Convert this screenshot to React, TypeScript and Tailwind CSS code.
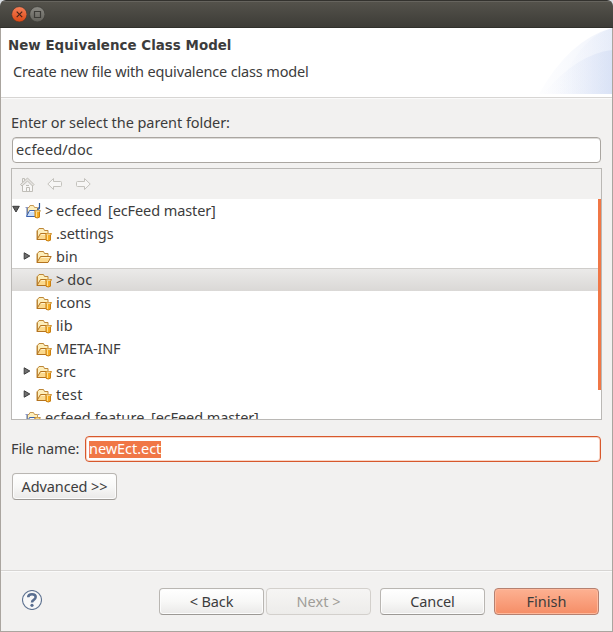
import React from "react";

function Folder({ badge = false }: { badge?: boolean }) {
  return (
    <svg width="16" height="16" viewBox="0 0 16 16" className="block shrink-0" fill="none">
      <path d="M1.500 12V4.500L3 2.500h4.500l1 2h3.500V7" fill="#fdeebb" stroke="#bd8637" />
      <path d="M1 13.500V4.500" stroke="#bd8637" />
      <path d="M1 13.500 4.500 7.500h10.700l-3.200 6z" fill="#fbd98d" stroke="#b4731f" strokeLinejoin="round" />
      <path d="M5.300 8.500h8.200" stroke="#fff3cd" />
      {badge && <Cylinder />}
    </svg>
  );
}

function Cylinder() {
  return (
    <g>
      <path d="M10 8v6.200q2.200 1.600 4.500 0V8z" fill="#f5a81d" stroke="#c97f12" />
      <path d="M11.500 9v5" stroke="#ffe08a" strokeWidth="1.200" />
      <path d="M9.500 8h6" stroke="#d28a14" strokeWidth="1.500" />
      <path d="M10.500 8.200h4" stroke="#fff0bd" />
    </g>
  );
}

function ProjectFolder({ java = false }: { java?: boolean }) {
  return (
    <svg width="16" height="16" viewBox="0 0 16 16" className="block shrink-0 overflow-visible" fill="none">
      <path d="M2.500 12V4.500h1.500l1-2h3.500l1 2h3V7" fill="#fdeebb" stroke="#c79a55" />
      <path d="M.5 4.500h2.500M13 4.500h1.500" stroke="#8d97c4" />
      <path d="M2 13.500V5" stroke="#4a6fb5" />
      <path d="M1.500 13.500 4.500 7.500h10.500l-3 6z" fill="#c9defa" stroke="#3b62b0" strokeLinejoin="round" />
      <path d="M5 8.500h8" stroke="#f4f9ff" />
      <Cylinder />
      {java && <path d="M14.500 0v4.500q0 2-2.500 1.500" stroke="#2b5797" strokeWidth="1.200" />}
    </svg>
  );
}

function Twisty({ open = false }: { open?: boolean }) {
  return (
    <svg width="8" height="8" viewBox="0 0 8 8" className="block shrink-0">
      {open ? (
        <path d="M.7 1.300h6.600L4 7z" fill="#606060" stroke="#3c3c3c" />
      ) : (
        <path d="M1.200 .8 6.800 4 1.200 7.200z" fill="#707070" stroke="#3c3c3c" />
      )}
    </svg>
  );
}

type RowProps = {
  name: string;
  tracking?: string;
  arrow?: boolean;
  plain?: boolean;
  changed?: boolean;
  selected?: boolean;
};

const rows: RowProps[] = [
  { name: ".settings", tracking: "tracking-[-0.05px]" },
  { name: "bin", arrow: true, plain: true, tracking: "tracking-[0.1px]" },
  { name: "doc", changed: true, selected: true, tracking: "tracking-[0.1px]" },
  { name: "icons", tracking: "tracking-[-0.1px]" },
  { name: "lib", tracking: "tracking-[0.1px]" },
  { name: "META-INF", tracking: "tracking-[-0.15px]" },
  { name: "src", arrow: true, tracking: "tracking-[0.2px]" },
  { name: "test", arrow: true, tracking: "tracking-[0.3px]" },
];

function Row({ name, tracking = "", arrow, plain, changed, selected }: RowProps) {
  return (
    <div
      className={
        "flex h-[23px] shrink-0 items-center pl-[11px] " +
        (selected ? "border-t border-[#cfcdca] bg-linear-to-b from-[#ebeae9] to-[#dad8d6]" : "")
      }
    >
      <div className="mb-[2px] w-[13px]">{arrow && <Twisty />}</div>
      <Folder badge={!plain} />
      <span className={"mb-[2px] ml-1 " + tracking}>
        {changed && <span className="mr-[3px] tracking-normal">&gt;</span>}
        {name}
      </span>
    </div>
  );
}

function Button({ label, kind = "normal", className = "" }: { label: string; kind?: "normal" | "disabled" | "primary"; className?: string }) {
  const look =
    kind === "primary"
      ? "border-[#b58171] bg-linear-to-b from-[#fdb192] to-[#f58d66] shadow-[inset_0_0_0_1px_#ffb99c]"
      : kind === "disabled"
        ? "border-[#d3d0cc] bg-linear-to-b from-[#f6f5f4] to-[#edecea] text-[#a09d98]"
        : "border-[#b9b6b2] border-b-[#9c9995] bg-linear-to-b from-white via-[#f8f8f7] to-[#eae9e8] shadow-[inset_0_0_0_1px_#fcfcfc]";
  return (
    <button className={"flex h-[27px] w-[105px] items-center justify-center rounded-[4px] border pb-px " + look + " " + className}>
      {label}
    </button>
  );
}

export default function App() {
  return (
    <div className="h-[632px] w-[613px] overflow-hidden bg-[#d9dde2] font-['Noto_Sans',sans-serif] text-[14.5px] leading-[22px] whitespace-nowrap text-[#3c3c3c]">
      <div className="flex h-full flex-col overflow-hidden rounded-t-[6px]">
        <div className="flex h-7 shrink-0 items-center gap-[2px] border-t border-b border-t-[#33322e] border-b-[#30302b] bg-linear-to-b from-[#55534c] to-[#3d3c37] pl-[11px] shadow-[inset_0_1px_0_#66645e]">
          <svg width="16" height="16" viewBox="0 0 16 16" className="block">
            <defs>
              <linearGradient id="close" x1="0" y1="0" x2="0" y2="1">
                <stop stopColor="#f68059" />
                <stop offset="1" stopColor="#dd4814" />
              </linearGradient>
            </defs>
            <circle cx="8.300" cy="8.300" r="7.600" fill="url(#close)" stroke="#33322e" strokeWidth=".5" />
            <path d="m5.700 5.700 5.500 5.500m0-5.500-5.500 5.500" stroke="#4a2418" strokeWidth="1.200" />
          </svg>
          <svg width="16" height="16" viewBox="0 0 16 16" className="block">
            <defs>
              <linearGradient id="max" x1="0" y1="0" x2="0" y2="1">
                <stop stopColor="#8b8a84" />
                <stop offset="1" stopColor="#62615b" />
              </linearGradient>
            </defs>
            <circle cx="8.300" cy="8.300" r="7.600" fill="url(#max)" stroke="#33322e" strokeWidth=".5" />
            <path d="M5.500 5.500h6v6h-6z" fill="none" stroke="#3c3b37" strokeWidth="1.200" />
          </svg>
        </div>

        <div className="flex min-h-0 grow flex-col border-r border-b border-l border-[#aaa59f] bg-[#f2f1f0]">
          <header className="flex h-[70px] shrink-0 justify-between border-b border-[#d7d5d3] bg-white">
            <div className="pt-[7px] pl-[7px]">
              <h1 className="font-['DejaVu_Sans',sans-serif] text-[13.400px] leading-[22px] font-bold tracking-[0.03px]">New Equivalence Class Model</h1>
              <p className="mt-[3px] pl-[5px] tracking-[-0.16px]">Create new file with equivalence class model</p>
            </div>
            <svg width="73" height="66" viewBox="0 0 73 66" className="block">
              <defs>
                <linearGradient id="swoosh">
                  <stop stopColor="#e8edfa" stopOpacity="0" />
                  <stop offset="1" stopColor="#cfdaf3" stopOpacity=".55" />
                </linearGradient>
                <linearGradient id="swooshLight">
                  <stop stopColor="#f4f6fc" stopOpacity=".2" />
                  <stop offset="1" stopColor="#e6ecf9" stopOpacity=".7" />
                </linearGradient>
              </defs>
              <path d="M0 66Q30 12 73 0V66z" fill="url(#swooshLight)" />
              <path d="M17 66Q40 9 73 0V66z" fill="url(#swoosh)" opacity=".45" />
              <path d="M4 66Q38 26 73 22V66z" fill="url(#swoosh)" />
            </svg>
          </header>

          <main className="flex grow flex-col border-t border-[#fafafa] pr-[10px] pl-[10px]">
            <label className="mt-[12px] tracking-[-0.07px]">Enter or select the parent folder:</label>
            <div className="mt-[4px] mr-[1px] ml-[1px] h-[26px] shrink-0 rounded-[4px] border border-[#aaa6a1] bg-white pl-[3px] leading-[22px] tracking-[0.15px] shadow-[inset_0_1px_0_#dddbd8]">
              ecfeed/doc
            </div>

            <div className="mt-[5px] flex h-[252px] shrink-0 flex-col border border-[#bab8b5]">
              <div className="flex h-[30px] shrink-0 items-center gap-[12px] pl-[7px]">
                <svg width="16" height="16" viewBox="0 0 16 16" fill="none" stroke="#bfbdb7" className="block">
                  <path d="M3.500 9v6.500h10V9" fill="#f8f7f6" />
                  <path d="M1.500 8.500 8.500 2l6.500 6.500L13.500 10l-5-5-5.500 5z" fill="#e6e4e1" />
                  <path d="M3.500 6V2.500h2v2" />
                  <path d="M7.500 15.500v-4h3v4M7 9.500h3" />
                </svg>
                <svg width="16" height="16" viewBox="0 0 16 16" fill="#f7f6f5" stroke="#c4c2bd" strokeLinejoin="round" className="block">
                  <path d="m.8 8 5.700-5.500v3h7q1 0 1 1v3q0 1-1 1h-7v3z" />
                </svg>
                <svg width="16" height="16" viewBox="0 0 16 16" fill="#f7f6f5" stroke="#c4c2bd" strokeLinejoin="round" className="block">
                  <path d="m15.200 8-5.700-5.500v3h-7q-1 0-1 1v3q0 1 1 1h7v3z" />
                </svg>
              </div>
              <div className="flex min-h-0 grow bg-white">
                <div className="flex min-w-0 grow flex-col overflow-hidden">
                  <div className="flex h-[23px] shrink-0 items-center">
                    <div className="mb-[3px] w-[13px]"><Twisty open /></div>
                    <ProjectFolder java />
                    <span className="mb-[2px] ml-[4px] w-[11px]">&gt;</span>
                    <span className="mb-[2px] w-[52px] tracking-[0.1px]">ecfeed</span>
                    <span className="mb-[2px] tracking-[-0.1px]">[ecFeed master]</span>
                  </div>
                  {rows.map((r) => (
                    <Row key={r.name} {...r} />
                  ))}
                  <div className="flex h-[23px] shrink-0 items-center pl-[13px]">
                    <ProjectFolder />
                    <span className="mb-[2px] ml-[4px] w-[106px] tracking-[0.05px]">ecfeed.feature</span>
                    <span className="mb-[2px] tracking-[-0.1px]">[ecFeed master]</span>
                  </div>
                </div>
                <div className="h-[191px] w-[3px] shrink-0 bg-[#f07746]" />
              </div>
            </div>

            <div className="mt-4 flex items-center">
              <label className="mb-[2px] w-[74px] tracking-[-0.15px]">File name:</label>
              <div className="mr-[1px] flex h-[26px] grow items-center rounded-[4px] border border-[#d7582c] bg-white pl-[3px] shadow-[inset_0_0_0_1px_#f9d5c6]">
                <span className="h-[17px] w-[72px] bg-[#f07746] leading-[15px] tracking-[-0.05px] text-white">newEct.ect</span>
              </div>
            </div>
            <Button label="Advanced >>" className="mt-[11px] ml-[1px] shrink-0 tracking-[-0.1px]" />
          </main>

          <footer className="flex h-[61px] shrink-0 items-center border-t border-[#d7d5d3] pr-[13px] pl-[21px] shadow-[inset_0_1px_0_#fafafa]">
            <svg width="20" height="20" viewBox="0 0 20 20" className="mb-[2px] block" fill="none">
              <circle cx="10" cy="10" r="9.500" fill="#f8f8f8" stroke="#5f7391" strokeWidth="1.100" />
              <path d="M6.200 7.300Q6.300 4.300 10 4.300q3.700 0 3.700 2.800 0 1.600-1.900 2.700Q10 10.800 10 12.400" stroke="#596e90" strokeWidth="2.500" />
              <circle cx="10" cy="15.300" r="1.600" fill="#596e90" />
            </svg>
            <div className="ml-auto flex items-center pt-px">
              <Button label="< Back" className="tracking-[-0.1px]" />
              <Button label="Next >" kind="disabled" className="ml-[2px]" />
              <Button label="Cancel" className="ml-[9px] tracking-[-0.1px]" />
              <Button label="Finish" kind="primary" className="ml-[9px]" />
            </div>
          </footer>
        </div>
      </div>
    </div>
  );
}
